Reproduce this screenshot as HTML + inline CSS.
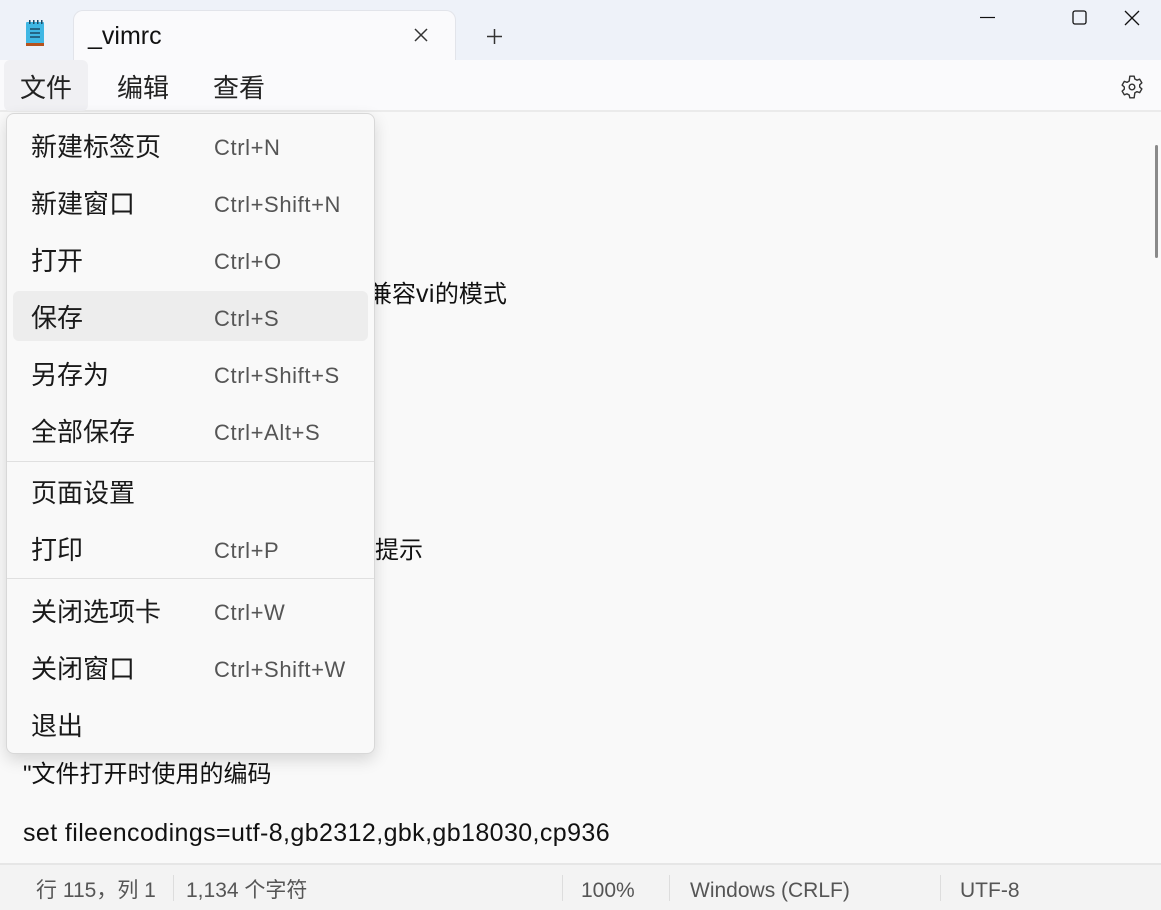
<!DOCTYPE html>
<html><head><meta charset="utf-8"><style>
*{margin:0;padding:0;box-sizing:border-box;line-height:1}
body{width:1161px;height:910px;overflow:hidden;background:#f9f9f9;font-family:"Liberation Sans","Noto Sans CJK SC",sans-serif;position:relative;color:#1a1a1a}
.abs{position:absolute;white-space:nowrap}
#title{left:0;top:0;width:1161px;height:60px;background:#eef2f9}
#tab{left:73px;top:10px;width:383px;height:52px;background:#fafafc;border:1px solid #e2e4ea;border-bottom:none;border-radius:10px 10px 0 0}
#menubar{left:0;top:60px;width:1161px;height:52px;background:#fafafc;border-bottom:2px solid #ebebeb}
.mb{font-size:26px;top:75px;color:#222}
.ed{font-size:24px;color:#111}
.lat{font-size:25px;letter-spacing:0.4px}
#menu{left:6px;top:113px;width:369px;height:641px;background:#f9f9f9;border:1px solid #d8d8d8;border-radius:8px;box-shadow:0 6px 16px rgba(0,0,0,.14)}
.it{position:absolute;left:24px;font-size:26px;color:#1a1a1a}
.sc{position:absolute;left:207px;font-size:22px;letter-spacing:0.6px;color:#555}
.div{position:absolute;left:0;width:367px;height:1px;background:#e0e0e0}
#status{left:0;top:863px;width:1161px;height:47px;background:#f3f3f3;border-top:2px solid #e6e6e6;font-size:21px;color:#555}
.st{position:absolute;top:15px;white-space:nowrap}
.sep{position:absolute;top:10px;width:1px;height:26px;background:#ddd}
</style></head><body>
<div id="title" class="abs"></div>
<svg class="abs" style="left:24px;top:19px" width="24" height="29" viewBox="0 0 24 29"><rect x="2" y="3" width="18" height="23" rx="1" fill="#3fb7e4"/><rect x="2" y="24" width="18" height="3" fill="#b5531e"/><g stroke="#1c4a66" stroke-width="1.5"><line x1="6" y1="10" x2="16" y2="10"/><line x1="6" y1="14" x2="16" y2="14"/><line x1="6" y1="18" x2="16" y2="18"/></g><g fill="#1c4a66"><rect x="5" y="1" width="1.5" height="4"/><rect x="9" y="1" width="1.5" height="4"/><rect x="13" y="1" width="1.5" height="4"/><rect x="17" y="1" width="1.5" height="4"/></g></svg>
<div id="tab" class="abs"></div>
<div class="abs" style="left:88px;top:24px;font-size:25px;color:#111">_vimrc</div>
<svg class="abs" style="left:413px;top:27px" width="16" height="16"><path d="M2 2L14 14M14 2L2 14" stroke="#333" stroke-width="1.5"/></svg>
<svg class="abs" style="left:486px;top:28px" width="17" height="17"><path d="M8.5 1V16M1 8.5H16" stroke="#333" stroke-width="1.5"/></svg>
<svg class="abs" style="left:980px;top:10px" width="170" height="20"><path d="M0 7.5H15" stroke="#111" stroke-width="1.2"/><rect x="93" y="1" width="13" height="13" rx="2" fill="none" stroke="#111" stroke-width="1.3"/><path d="M145 1L159 15M159 1L145 15" stroke="#111" stroke-width="1.3"/></svg>
<div id="menubar" class="abs"></div>
<div class="abs" style="left:4px;top:60px;width:84px;height:51px;background:#f0f0f3;border-radius:6px"></div>
<div class="abs mb" style="left:20px">文件</div>
<div class="abs mb" style="left:117px">编辑</div>
<div class="abs mb" style="left:213px">查看</div>
<svg class="abs" style="left:1119px;top:74px" width="26" height="26" viewBox="0 0 24 24"><path d="M10 2h4l.6 2.6 2 1.1 2.5-.9 2 3.4-2 1.8v2l2 1.8-2 3.4-2.5-.9-2 1.1L14 22h-4l-.6-2.6-2-1.1-2.5.9-2-3.4 2-1.8v-2l-2-1.8 2-3.4 2.5.9 2-1.1z" fill="none" stroke="#333" stroke-width="1.3" stroke-linejoin="round"/><circle cx="12" cy="12" r="2.6" fill="none" stroke="#333" stroke-width="1.3"/></svg>
<div class="abs" style="left:1155px;top:145px;width:3px;height:113px;background:#8a8a8a;border-radius:2px"></div>
<div class="abs ed" style="left:368px;top:282px">兼容<span class="lat">vi</span>的模式</div>
<div class="abs ed" style="left:375px;top:539px">提示</div>
<div class="abs ed" style="left:23px;top:763px">"文件打开时使用的编码</div>
<div class="abs ed lat" style="left:23px;top:821px">set fileencodings=utf-8,gb2312,gbk,gb18030,cp936</div>
<div id="menu" class="abs">
<div style="position:absolute;left:6px;top:177px;width:355px;height:50px;background:#ededed;border-radius:6px"></div>
<div class="it" style="top:20px">新建标签页</div><div class="sc" style="top:23px">Ctrl+N</div>
<div class="it" style="top:77px">新建窗口</div><div class="sc" style="top:80px">Ctrl+Shift+N</div>
<div class="it" style="top:134px">打开</div><div class="sc" style="top:137px">Ctrl+O</div>
<div class="it" style="top:191px">保存</div><div class="sc" style="top:194px">Ctrl+S</div>
<div class="it" style="top:248px">另存为</div><div class="sc" style="top:251px">Ctrl+Shift+S</div>
<div class="it" style="top:305px">全部保存</div><div class="sc" style="top:308px">Ctrl+Alt+S</div>
<div class="div" style="top:347px"></div>
<div class="it" style="top:366px">页面设置</div>
<div class="it" style="top:423px">打印</div><div class="sc" style="top:426px">Ctrl+P</div>
<div class="div" style="top:464px"></div>
<div class="it" style="top:485px">关闭选项卡</div><div class="sc" style="top:488px">Ctrl+W</div>
<div class="it" style="top:542px">关闭窗口</div><div class="sc" style="top:545px">Ctrl+Shift+W</div>
<div class="it" style="top:599px">退出</div>
</div>
<div id="status" class="abs">
<div class="st" style="left:36px">行 115，列 1</div>
<div class="sep" style="left:173px"></div>
<div class="st" style="left:186px">1,134 个字符</div>
<div class="sep" style="left:562px"></div>
<div class="st" style="left:581px">100%</div>
<div class="sep" style="left:669px"></div>
<div class="st" style="left:690px">Windows (CRLF)</div>
<div class="sep" style="left:940px"></div>
<div class="st" style="left:960px">UTF-8</div>
</div>
</body></html>
